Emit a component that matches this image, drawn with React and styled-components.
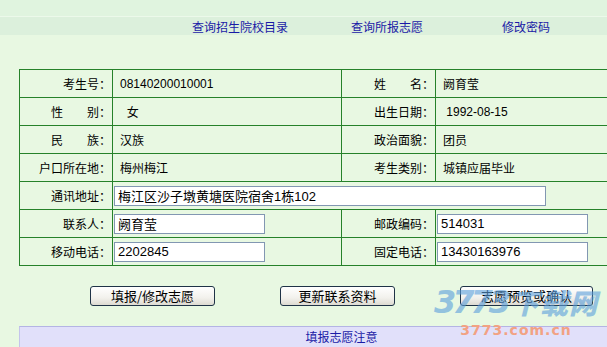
import React from 'react'
import styled, { createGlobalStyle } from 'styled-components'

const GlobalStyle = createGlobalStyle`
  html, body {
    margin: 0;
    padding: 0;
    background: #e8f8e2;
    overflow: hidden;
  }
  body {
    font-family: 'Noto Sans CJK SC', 'Liberation Sans', sans-serif;
    font-size: 12px;
    color: #000;
  }
`

const infoRows = [
  [{ label: '考生号：', value: '08140200010001' }, { label: '姓　　名：', value: '阙育莹' }],
  [{ label: '性　　别：', value: '\u00a0\u00a0女' }, { label: '出生日期：', value: '\u00a01992-08-15' }],
  [{ label: '民　　族：', value: '汉族' }, { label: '政治面貌：', value: '团员' }],
  [{ label: '户口所在地：', value: '梅州梅江' }, { label: '考生类别：', value: '城镇应届毕业' }],
]

const inputRows = [
  [{ label: '联系人：', value: '阙育莹' }, { label: '邮政编码：', value: '514031' }],
  [{ label: '移动电话：', value: '2202845' }, { label: '固定电话：', value: '13430163976' }],
]

const App = () => {
  return (
    <Page>
      <GlobalStyle />
      <TopStrip />
      <Nav>
        <NavLink>查询招生院校目录</NavLink>
        <NavLink>查询所报志愿</NavLink>
        <NavLink>修改密码</NavLink>
      </Nav>

      <InfoTable>
        {infoRows.map((row, i) =>
          row.map((c, j) => (
            <React.Fragment key={`${i}-${j}`}>
              <Label>{c.label}</Label>
              <Value>{c.value}</Value>
            </React.Fragment>
          ))
        )}
        <Label>通讯地址：</Label>
        <Value wide>
          <TextInput width={432} defaultValue='梅江区沙子墩黄塘医院宿舍1栋102' />
        </Value>
        {inputRows.map((row, i) =>
          row.map((c, j) => (
            <React.Fragment key={`in-${i}-${j}`}>
              <Label>{c.label}</Label>
              <Value>
                <TextInput width={151} defaultValue={c.value} />
              </Value>
            </React.Fragment>
          ))
        )}
      </InfoTable>

      <ButtonRow>
        <Button width={125}>填报/修改志愿</Button>
        <Button width={115}>更新联系资料</Button>
        <Button width={133}>志愿预览或确认</Button>
      </ButtonRow>

      <NoticeBar>填报志愿注意</NoticeBar>

      <Watermark>
        <LogoLine>
          <LogoNum>3773</LogoNum>
          <LogoCn>下载网</LogoCn>
        </LogoLine>
        <LogoUrl>3773.com.cn</LogoUrl>
      </Watermark>
    </Page>
  )
}

const Page = styled.div`
  position: relative;
  width: 607px;
  height: 347px;
  overflow: hidden;
  display: flex;
  flex-direction: column;
`

const TopStrip = styled.div`
  height: 17px;
  background: #e0f4df;
  border-bottom: 1px solid #ecf9ea;
`

const Nav = styled.div`
  height: 19px;
  background: #dcf0dc;
  display: grid;
  grid-template-columns: 159px 151px auto;
  align-items: center;
  padding-left: 192px;
  padding-top: 1px;
`

const NavLink = styled.a`
  color: #1a1aa6;
  font-size: 12px;
  line-height: 14px;
  cursor: pointer;
`

const InfoTable = styled.div`
  margin: 34px 0 0 19px;
  width: 644px;
  display: grid;
  grid-template-columns: 93px 229px 94px 1fr;
  border-top: 1px solid #26822a;
  border-left: 1px solid #26822a;
`

const Cell = styled.div`
  box-sizing: border-box;
  height: 28px;
  border-right: 1px solid #26822a;
  border-bottom: 1px solid #26822a;
  display: flex;
  align-items: center;
  white-space: pre;
`

const Label = styled(Cell)`
  justify-content: flex-end;
  padding-right: 1px;
`

const Value = styled(Cell)`
  padding-left: ${(p) => (typeof p.children === 'string' ? '7px' : '1px')};
  font-family: 'Liberation Sans', 'Noto Sans CJK SC', sans-serif;
  grid-column: ${(p) => (p.wide ? 'span 3' : 'auto')};
`

const TextInput = styled.input`
  box-sizing: border-box;
  width: ${(p) => p.width}px;
  height: 20px;
  border: 1px solid #8297b2;
  background: #fff;
  padding: 0 3px;
  font-family: 'Liberation Sans', 'Noto Sans CJK SC', sans-serif;
  font-size: 13px;
  color: #000;
  outline: none;
`

const ButtonRow = styled.div`
  margin-top: 20px;
  display: grid;
  grid-template-columns: 190px 180px auto;
  padding-left: 90px;
`

const Button = styled.button`
  box-sizing: border-box;
  width: ${(p) => p.width}px;
  height: 20px;
  border: 1px solid #1f3347;
  border-radius: 3px;
  background: linear-gradient(#ffffff, #f2f1ec 60%, #dedbd2);
  font-family: 'Noto Sans CJK SC', sans-serif;
  font-size: 13px;
  line-height: 16px;
  color: #000;
  padding: 0;
`

const NoticeBar = styled.div`
  margin: 20px 0 0 19px;
  width: 644px;
  height: 22px;
  box-sizing: border-box;
  background: #e1e0fa;
  border-top: 1px solid #b4b4e4;
  border-left: 1px solid #c4c4ec;
  color: #1a1aa6;
  text-align: center;
  line-height: 19px;
`

const Watermark = styled.div`
  position: absolute;
  left: 436px;
  top: 285px;
  width: 160px;
  pointer-events: none;
  display: flex;
  flex-direction: column;
  align-items: center;
  white-space: nowrap;
`

const LogoLine = styled.div`
  display: flex;
  align-items: center;
  opacity: 0.6;
  height: 34px;
`

const LogoNum = styled.span`
  font-family: 'DejaVu Sans', sans-serif;
  font-weight: bold;
  font-style: italic;
  font-size: 32px;
  line-height: 34px;
  letter-spacing: -4px;
  color: #5b9fdc;
`

const LogoCn = styled.span`
  font-family: 'Noto Sans CJK SC', sans-serif;
  font-weight: 900;
  font-style: italic;
  font-size: 28px;
  line-height: 34px;
  letter-spacing: 1px;
  margin-left: 4px;
  color: #5b9fdc;
`

const LogoUrl = styled.span`
  font-family: 'DejaVu Sans', sans-serif;
  font-weight: bold;
  font-size: 14px;
  line-height: 16px;
  letter-spacing: 1px;
  color: #f2a283;
  margin-top: 3px;
`

export default App
